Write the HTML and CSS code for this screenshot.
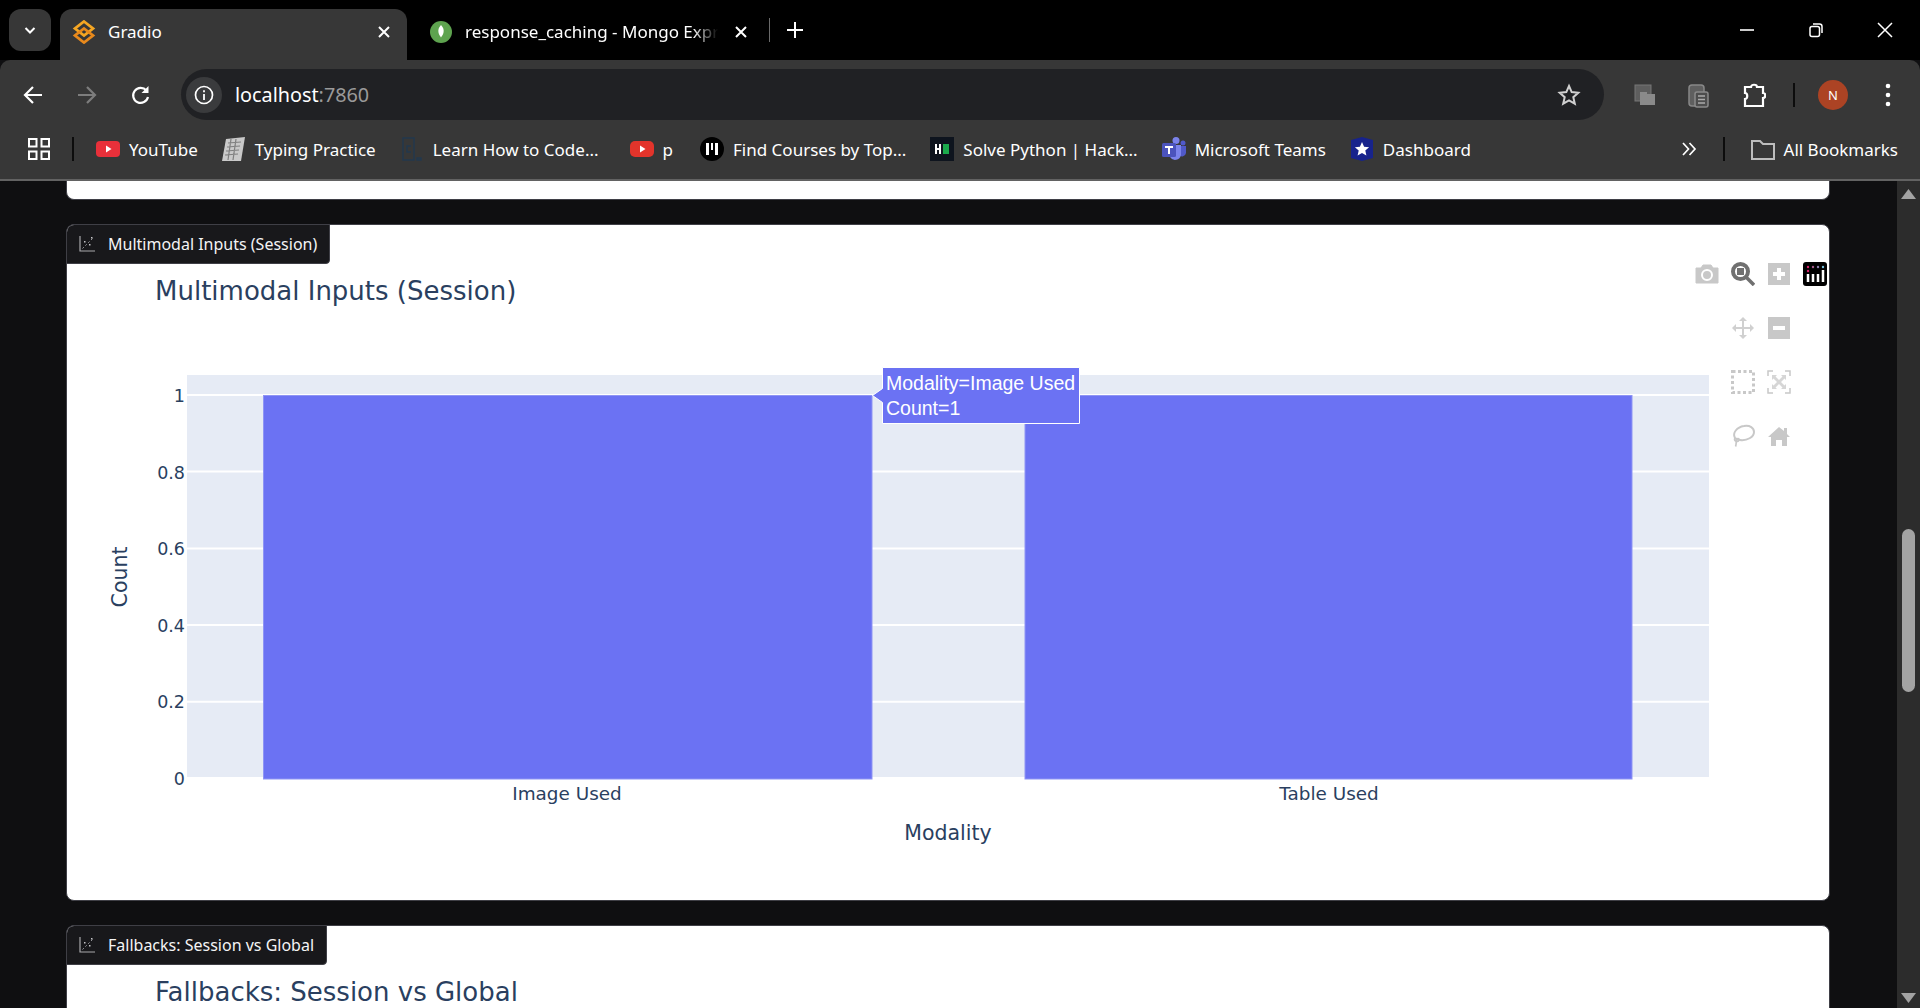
FILE: index.html
```html
<!DOCTYPE html>
<html lang="en">
<head>
  <meta charset="UTF-8" />
  <title>Gradio</title>
  <link rel="stylesheet" href="styles.css">
</head>
<body>
  <div class="tabstrip">
    <div class="tab-search">
      <svg width="14" height="14" viewBox="0 0 14 14"><path d="M2.5 5l4.500 4.500L11.500 5" fill="none" stroke="#fff" stroke-width="2"/></svg>
    </div>
    <div class="tab tab-active">
      <svg class="tab-icon" width="24" height="24" viewBox="0 0 24 24"><path d="M12 1.500l9 7-9 7-9-7z" fill="none" stroke="#f5a623" stroke-width="2.800"/><path d="M12 8.500l9 7-9 7-9-7z" fill="none" stroke="#e8891c" stroke-width="2.800"/></svg>
      <span class="tab-title">Gradio</span>
      <svg class="tab-close" width="14" height="14" viewBox="0 0 14 14"><path d="M2 2l10 10M12 2L2 12" stroke="#fff" stroke-width="2"/></svg>
    </div>
    <div class="tab tab-second">
      <svg class="tab-icon" width="22" height="22" viewBox="0 0 22 22"><circle cx="11" cy="11" r="11" fill="#5ea34f"/><path d="M11 4c2.500 2.500 3 5 2.500 7.500-.4 2-1.500 3.500-2.500 5-1-1.500-2.100-3-2.500-5C8 9 8.500 6.500 11 4z" fill="#fff"/></svg>
      <span class="tab-title tab-clip">response_caching - Mongo Express</span>
      <svg class="tab-close" width="14" height="14" viewBox="0 0 14 14"><path d="M2 2l10 10M12 2L2 12" stroke="#fff" stroke-width="2"/></svg>
    </div>
    <div class="tab-sep"></div>
    <svg class="tab-new" width="18" height="18" viewBox="0 0 18 18"><path d="M9 1v16M1 9h16" stroke="#fff" stroke-width="2"/></svg>
    <div class="window-btns">
      <svg width="16" height="16" viewBox="0 0 16 16"><path d="M1 8h14" stroke="#fff" stroke-width="1.600"/></svg>
      <svg width="16" height="16" viewBox="0 0 16 16"><rect x="2" y="4.500" width="9.500" height="10" rx="2" fill="none" stroke="#fff" stroke-width="1.500"/><path d="M5 2h6.500A2.500 2.500 0 0 1 14 4.500V11" fill="none" stroke="#fff" stroke-width="1.500"/></svg>
      <svg width="16" height="16" viewBox="0 0 16 16"><path d="M1 1l14 14M15 1L1 15" stroke="#fff" stroke-width="1.500"/></svg>
    </div>
  </div>

  <div class="toolbar">
    <svg class="nav-btn" width="22" height="22" viewBox="0 0 22 22"><path d="M20 11H4M11 3l-8 8 8 8" fill="none" stroke="#fff" stroke-width="2.200"/></svg>
    <svg class="nav-btn" width="22" height="22" viewBox="0 0 22 22"><path d="M2 11h16M11 3l8 8-8 8" fill="none" stroke="#7d7d7d" stroke-width="2.200"/></svg>
    <svg class="nav-btn" width="22" height="22" viewBox="0 0 22 22"><path d="M18 13a7.500 7.500 0 1 1-1.600-6.500" fill="none" stroke="#fff" stroke-width="2.200"/><path d="M18.500 2v7h-7z" fill="#fff"/></svg>
    <div class="omnibox">
      <div class="site-info">
        <svg width="20" height="20" viewBox="0 0 20 20"><circle cx="10" cy="10" r="8.500" fill="none" stroke="#fff" stroke-width="1.700"/><path d="M10 9v6M10 5.200v2" stroke="#fff" stroke-width="1.800"/></svg>
      </div>
      <span class="url">localhost<span class="url-port">:7860</span></span>
      <svg class="star" width="24" height="24" viewBox="0 0 24 24"><path d="M12 3l2.700 6.100 6.600.7-5 4.400 1.500 6.500L12 17.300l-5.800 3.400 1.500-6.500-5-4.400 6.600-.7z" fill="none" stroke="#d0d0d0" stroke-width="2"/></svg>
    </div>
    <svg class="ext ext-first" width="24" height="24" viewBox="0 0 24 24"><rect x="2" y="2" width="16" height="16" fill="#5e5e5e" stroke="#777"/><path d="M7 9h7v2h8v11H7z" fill="#8a8a8a"/></svg>
    <svg class="ext ext-second" width="24" height="26" viewBox="0 0 24 26"><rect x="3" y="3" width="15" height="21" rx="3" fill="#5f5f5f" stroke="#888" stroke-width="1.500"/><rect x="9" y="10" width="13" height="15" rx="2" fill="#4d4d4d" stroke="#8a8a8a" stroke-width="1.500"/><path d="M12 14h7M12 17.500h7M12 21h7" stroke="#aaa" stroke-width="1.600"/></svg>
    <svg class="ext" width="24" height="28" viewBox="0 0 24 28"><path d="M3 6h6c0-3 6-3 6 0h6v6c3 0 3 5 0 5v8H3v-7c3 0 3-6 0-6z" fill="none" stroke="#fff" stroke-width="2.200"/></svg>
    <div class="toolbar-sep"></div>
    <div class="avatar">N</div>
    <svg class="menu-dots" width="6" height="24" viewBox="0 0 6 24"><circle cx="3" cy="3" r="2.300" fill="#fff"/><circle cx="3" cy="12" r="2.300" fill="#fff"/><circle cx="3" cy="21" r="2.300" fill="#fff"/></svg>
  </div>

  <div class="bookmarks">
    <svg class="apps" width="22" height="22" viewBox="0 0 22 22"><g fill="none" stroke="#fff" stroke-width="2"><rect x="1" y="1" width="7.500" height="7.500"/><rect x="13.500" y="1" width="7.500" height="7.500"/><rect x="1" y="13.500" width="7.500" height="7.500"/><rect x="13.500" y="13.500" width="7.500" height="7.500"/></g></svg>
    <div class="bm-sep"></div>
    <a class="bm bm-youtube">
      <svg width="24" height="24" viewBox="0 0 24 24"><rect y="4" width="24" height="16" rx="4" fill="#e8303a"/><path d="M10 8.500l5.500 3.500-5.500 3.500z" fill="#fff"/></svg>
      <span>YouTube</span>
    </a>
    <a class="bm bm-typing">
      <svg width="24" height="24" viewBox="0 0 24 24"><path d="M4 2l19-2-4 24H0z" fill="#c9c9c9"/><path d="M6 6l13-1M5 10l13-1M4 14l13-1M3 18l13-1M9 2L6 23M14 2l-3 21" stroke="#7f7f7f" stroke-width="1.200"/></svg>
      <span>Typing Practice</span>
    </a>
    <a class="bm bm-learn">
      <svg width="24" height="24" viewBox="0 0 24 24"><path d="M3 1h11v22H3zM17 21h4v2h-4z" fill="none" stroke="#23384d" stroke-width="1.500"/><path d="M11 9H7v6h4" fill="none" stroke="#23384d" stroke-width="1.500"/></svg>
      <span>Learn How to Code...</span>
    </a>
    <a class="bm bm-p">
      <svg width="24" height="24" viewBox="0 0 24 24"><rect y="4" width="24" height="16" rx="5" fill="#e3342b"/><path d="M10 8.500l5.500 3.500-5.500 3.500z" fill="#fff"/></svg>
      <span>p</span>
    </a>
    <a class="bm bm-find">
      <svg width="24" height="24" viewBox="0 0 24 24"><circle cx="12" cy="12" r="12" fill="#000"/><path d="M6 6h3v12H6zM11 6h2v7h-2zM15 6h3v12h-3z" fill="#fff"/></svg>
      <span>Find Courses by Top...</span>
    </a>
    <a class="bm bm-hack">
      <svg width="24" height="24" viewBox="0 0 24 24"><rect width="24" height="24" fill="#0e141e"/><path d="M5 7h2v4h2V7h2v10H9v-4H7v4H5z" fill="#fff"/><rect x="13" y="7" width="6" height="10" fill="#1ba94c"/></svg>
      <span>Solve Python | Hack...</span>
    </a>
    <a class="bm bm-teams">
      <svg width="24" height="24" viewBox="0 0 24 24"><circle cx="14" cy="3.500" r="3.500" fill="#7b83eb"/><circle cx="21" cy="6" r="2.500" fill="#5059c9"/><path d="M17 9h7v7a4 4 0 0 1-7 2z" fill="#5059c9"/><path d="M8 8h11v10a6 6 0 0 1-11 2z" fill="#7b83eb"/><rect y="6" width="14" height="14" rx="1.500" fill="#4b53bc"/><path d="M3 9h8v2H8v6H6v-6H3z" fill="#fff"/></svg>
      <span>Microsoft Teams</span>
    </a>
    <a class="bm bm-dash">
      <svg width="24" height="24" viewBox="0 0 24 24"><path d="M1 3l11-3 11 3v18l-11 3-11-3z" fill="#17238c"/><path d="M12 5l2.100 4.700 5 .5-3.800 3.300 1.100 5L12 16l-4.400 2.500 1.100-5-3.800-3.300 5-.5z" fill="#fff"/></svg>
      <span>Dashboard</span>
    </a>
    <svg class="bm-more" width="16" height="16" viewBox="0 0 16 16"><path d="M2 2l5.500 6L2 14M8.500 2l5.500 6-5.500 6" fill="none" stroke="#fff" stroke-width="1.700"/></svg>
    <div class="bm-sep bm-sep-right"></div>
    <a class="bm bm-all">
      <svg width="24" height="24" viewBox="0 0 24 24"><path d="M1 4h8l3 3h11v15H1z" fill="none" stroke="#bdbdbd" stroke-width="2"/></svg>
      <span>All Bookmarks</span>
    </a>
  </div>

  <div class="viewport">
    <div class="page">
      <div class="card card-tail"></div>

      <div class="card card-chart">
        <div class="block-label">
          <svg width="16" height="16" viewBox="0 0 16 16"><path d="M1 0v15h15" fill="none" stroke="#a8a8ac" stroke-width="1.200"/><path d="M3.500 12.500L14 2" stroke="#96969a" stroke-dasharray="2 2"/><path d="M5 5h1.500v1.500H5zM10 8h1.500v1.500H10zM12 1h1.500v1.500H12z" fill="#c4c4c8"/></svg>
          <span>Multimodal Inputs (Session)</span>
        </div>

        <svg class="chart" width="1764" height="677" viewBox="66 224 1764 677">
          <text class="chart-title" x="155" y="300">Multimodal Inputs (Session)</text>
          <rect x="187" y="375" width="1522" height="403" fill="#e6ebf5"/>
          <g stroke="#fff" stroke-width="2">
            <path d="M187 395h1522M187 471.600h1522M187 548.400h1522M187 625h1522M187 701.700h1522M187 778h1522"/>
          </g>
          <rect class="bar" x="263.500" y="395.500" width="608.500" height="383.500"/>
          <rect class="bar" x="1025" y="395.500" width="607" height="383.500"/>
          <g class="tick tick-y">
            <text x="185" y="402">1</text>
            <text x="185" y="479">0.8</text>
            <text x="185" y="555">0.6</text>
            <text x="185" y="632">0.4</text>
            <text x="185" y="708">0.2</text>
            <text x="185" y="785">0</text>
          </g>
          <g class="tick tick-x">
            <text x="567" y="800">Image Used</text>
            <text x="1329" y="800">Table Used</text>
          </g>
          <text class="axis-title" x="948" y="840">Modality</text>
          <text class="axis-title" transform="translate(127 577) rotate(-90)">Count</text>
          <path class="hover-box" d="M882.500 367.500h197v56h-197v-21l-10-7 10-7z"/>
          <text class="hover-text" x="886" y="390">Modality=Image Used</text>
          <text class="hover-text" x="886" y="415">Count=1</text>
        </svg>

        <div class="modebar">
          <svg width="24" height="24" viewBox="0 0 24 24"><path d="M1 6h5l2-3h8l2 3h5v15H1z" fill="#c8c8c8" stroke="#c8c8c8" stroke-linejoin="round"/><circle cx="12" cy="13" r="5" fill="none" stroke="#fff" stroke-width="2"/></svg>
          <svg width="24" height="24" viewBox="0 0 24 24"><circle cx="9.500" cy="9.500" r="7.500" fill="#fff" stroke="#707070" stroke-width="4"/><rect x="6" y="6" width="7" height="7" fill="#707070"/><path d="M15.500 15.500L23 23" stroke="#707070" stroke-width="3.500"/></svg>
          <svg width="24" height="24" viewBox="0 0 24 24"><rect x="1" y="1" width="22" height="22" fill="#c8c8c8"/><path d="M12 6v12M6 12h12" stroke="#fff" stroke-width="4"/></svg>
          <svg width="24" height="24" viewBox="0 0 24 24"><rect width="24" height="24" rx="3" fill="#000"/><path d="M5 12v8M10 12v8M15 12v8M20 8v12" stroke="#fff" stroke-width="2.500"/><circle cx="5" cy="5" r="1.200" fill="#d6226a"/><circle cx="5" cy="9" r="1.200" fill="#d6226a"/><circle cx="10" cy="5" r="1.200" fill="#a65a8c"/><circle cx="15" cy="5" r="1.200" fill="#8f7fb0"/><circle cx="20" cy="5" r="1.200" fill="#79c4e0"/></svg>

          <svg class="mode-start" width="24" height="24" viewBox="0 0 24 24"><path d="M12 1l4 4h-3v6h6V8l4 4-4 4v-3h-6v6h3l-4 4-4-4h3v-6H5v3l-4-4 4-4v3h6V5H8z" fill="#d0d0d0"/></svg>
          <svg width="24" height="24" viewBox="0 0 24 24"><rect x="1" y="1" width="22" height="22" fill="#c8c8c8"/><path d="M6 12h12" stroke="#fff" stroke-width="4"/></svg>

          <svg class="mode-start" width="24" height="24" viewBox="0 0 24 24"><rect x="1.500" y="1.500" width="21" height="21" fill="none" stroke="#c8c8c8" stroke-width="3" stroke-dasharray="3 2.500"/></svg>
          <svg width="24" height="24" viewBox="0 0 24 24"><path d="M6 1H1v5M18 1h5v5M6 23H1v-5M18 23h5v-5" fill="none" stroke="#c8c8c8" stroke-width="1.500"/><path d="M5 5h5L8.500 6.500 12 10l3.500-3.500L14 5h5v5l-1.500-1.500L14 12l3.500 3.500L19 14v5h-5l1.500-1.500L12 14l-3.500 3.500L10 19H5v-5l1.500 1.500L10 12 6.500 8.500 5 10z" fill="#d6d6d6"/></svg>

          <svg class="mode-start" width="24" height="24" viewBox="0 0 24 24"><path d="M4 14C1 9 6 3 13 2c6-1 10 2 10 6 0 5-7 9-14 8-2-.3-4-1-5-2z" fill="none" stroke="#c8c8c8" stroke-width="2"/><path d="M4 14c-2 3 3 5 4 2 .4-1.500-2-2-2.500-.5-.5 2 0 5-1 7" fill="none" stroke="#c8c8c8" stroke-width="1.700"/></svg>
          <svg width="24" height="24" viewBox="0 0 24 24"><path d="M12 3l5 4V4h3v6l3 3h-3v9h-5v-6H9v6H4v-9H1z" fill="#c8c8c8"/></svg>
        </div>
      </div>

      <div class="card card-chart">
        <div class="block-label">
          <svg width="16" height="16" viewBox="0 0 16 16"><path d="M1 0v15h15" fill="none" stroke="#a8a8ac" stroke-width="1.200"/><path d="M3.500 12.500L14 2" stroke="#96969a" stroke-dasharray="2 2"/><path d="M5 5h1.500v1.500H5zM10 8h1.500v1.500H10zM12 1h1.500v1.500H12z" fill="#c4c4c8"/></svg>
          <span>Fallbacks: Session vs Global</span>
        </div>
        <svg class="chart" width="1764" height="677" viewBox="66 224 1764 677">
          <text class="chart-title" x="155" y="300">Fallbacks: Session vs Global</text>
        </svg>
      </div>
    </div>

    <div class="scrollbar">
      <svg width="15" height="10" viewBox="0 0 15 10"><path d="M7.500 0L15 10H0z" fill="#a3a3a3"/></svg>
      <div class="scroll-thumb"></div>
      <svg width="15" height="10" viewBox="0 0 15 10"><path d="M7.500 10L15 0H0z" fill="#a3a3a3"/></svg>
    </div>
  </div>
</body>
</html>
```

FILE: styles.css
```css
* {
  box-sizing: border-box;
}
html, body {
  height: 100%;
}
body {
  margin: 0;
  display: flex;
  flex-direction: column;
  overflow: hidden;
  background-color: #0f0f11;
  font-family: "Noto Sans", "Open Sans", sans-serif;
  color: #fff;
}
svg {
  display: block;
  flex: none;
}

/* tab strip */
.tabstrip {
  height: 60px;
  flex: none;
  display: flex;
  align-items: flex-start;
  background-color: #000;
}
.tab-search {
  width: 42px;
  height: 42px;
  margin: 9px 0 0 9px;
  border-radius: 12px;
  background-color: #373737;
  display: flex;
  align-items: center;
  justify-content: center;
}
.tab {
  display: flex;
  align-items: center;
  height: 51px;
  margin-top: 9px;
  font-size: 17px;
}
.tab-active {
  width: 347px;
  margin-left: 9px;
  padding: 0 16px 6px 12px;
  background-color: #373737;
  border-radius: 12px 12px 0 0;
}
.tab-second {
  width: 340px;
  margin-left: 22px;
  padding: 0 21px 6px 1px;
}
.tab-title {
  flex: 1;
  margin-left: 12px;
  white-space: nowrap;
  overflow: hidden;
}
.tab-clip {
  margin-left: 13px;
  -webkit-mask-image: linear-gradient(to right, #000 90%, transparent);
  mask-image: linear-gradient(to right, #000 90%, transparent);
}
.tab-close {
  margin-left: 16px;
}
.tab-sep {
  width: 1px;
  height: 24px;
  margin: 18px 0 0 0;
  background-color: #6a6a6a;
}
.tab-new {
  margin: 21px 0 0 16px;
}
.window-btns {
  margin: 22px 27px 0 auto;
  display: flex;
  gap: 53px;
}

/* toolbar */
.toolbar {
  height: 60px;
  flex: none;
  display: flex;
  align-items: center;
  padding: 9px 0 0 22px;
  gap: 32px;
  background-color: #373737;
  border-radius: 10px 10px 0 0;
}
.omnibox {
  width: 1423px;
  height: 51px;
  margin-left: -3px;
  padding: 0 23px 0 5px;
  display: flex;
  align-items: center;
  background-color: #202124;
  border-radius: 26px;
}
.site-info {
  width: 36px;
  height: 36px;
  border-radius: 50%;
  background-color: #3a3b3d;
  display: flex;
  align-items: center;
  justify-content: center;
}
.url {
  margin-left: 13px;
  font-size: 19.800px;
}
.url-port {
  color: #9a9a9a;
}
.star {
  margin-left: auto;
}
.ext-first {
  margin-left: -3px;
}
.ext-second {
  margin-left: -3px;
}
.toolbar-sep {
  width: 2px;
  height: 24px;
  margin: 0 -5px;
  background-color: #0c0c0c;
}
.avatar {
  width: 30px;
  height: 30px;
  margin-left: -4px;
  border-radius: 50%;
  background-color: #ac4324;
  font-size: 13px;
  display: flex;
  align-items: center;
  justify-content: center;
}
.menu-dots {
  margin-left: 5px;
}

/* bookmarks bar */
.bookmarks {
  height: 61px;
  flex: none;
  display: flex;
  align-items: center;
  padding: 0 22px 1px 28px;
  background-color: #373737;
  border-bottom: 2px solid #626262;
  font-size: 17px;
}
.bm {
  display: flex;
  align-items: center;
  gap: 9px;
  margin-left: 24px;
  white-space: nowrap;
}
.bm-sep {
  width: 2px;
  height: 24px;
  margin-left: 22px;
  background-color: #0c0c0c;
}
.bm-more {
  margin-left: auto;
}
.bm-sep-right {
  margin-left: 26px;
}
.bm-all {
  margin-left: 26px;
}
.bm-youtube {
  margin-left: 22px;
}
.bm-p {
  margin-left: 31px;
}
.bm-find {
  margin-left: 27px;
}

/* page area */
.viewport {
  flex: 1;
  min-height: 0;
  display: flex;
  overflow: hidden;
}
.page {
  flex: 1;
  padding: 0 67px 0 66px;
  display: flex;
  flex-direction: column;
  gap: 24px;
}
.card {
  flex: none;
  background-color: #fff;
  border: 1px solid #3f3f46;
}
.card-tail {
  height: 19px;
  border-top: 0;
  border-radius: 0 0 8px 8px;
}
.card-chart {
  position: relative;
  height: 677px;
  border-radius: 8px;
  overflow: hidden;
}
.chart {
  margin: -1px;
}
.block-label {
  position: absolute;
  top: -1px;
  left: -1px;
  height: 40px;
  padding: 0 12px 0 12px;
  display: flex;
  align-items: center;
  gap: 13px;
  background-color: #18181b;
  border: 1px solid #3f3f46;
  border-radius: 8px 0 4px 0;
  font-size: 16px;
  color: #f4f4f5;
}

/* plotly chart */
.chart-title {
  font: 26px "DejaVu Sans", sans-serif;
  fill: #2a3f5f;
}
.bar {
  fill: #6b72f3;
  stroke: #8f95f5;
}
.tick {
  font: 17.500px "DejaVu Sans", sans-serif;
  fill: #2a3f5f;
}
.tick-y {
  text-anchor: end;
}
.tick-x {
  font-size: 18.400px;
  text-anchor: middle;
}
.axis-title {
  font: 20.500px "DejaVu Sans", sans-serif;
  fill: #2a3f5f;
  text-anchor: middle;
}
.hover-box {
  fill: #6b72f3;
  stroke: #fff;
  stroke-width: 1;
}
.hover-text {
  font: 19.500px "Liberation Sans", sans-serif;
  fill: #fff;
}
.modebar {
  position: absolute;
  top: 37px;
  right: 2px;
  display: grid;
  grid-template-columns: repeat(4, 24px);
  grid-auto-rows: 24px;
  column-gap: 12px;
  row-gap: 30px;
}
.mode-start {
  grid-column: 2;
}

/* scrollbar */
.scrollbar {
  position: relative;
  width: 23px;
  flex: none;
  padding: 8px 0 5px;
  display: flex;
  flex-direction: column;
  align-items: center;
  justify-content: space-between;
  background-color: #2c2c2c;
}
.scroll-thumb {
  position: absolute;
  top: 348px;
  left: 5px;
  width: 13px;
  height: 163px;
  border-radius: 7px;
  background-color: #a3a3a3;
}
```
